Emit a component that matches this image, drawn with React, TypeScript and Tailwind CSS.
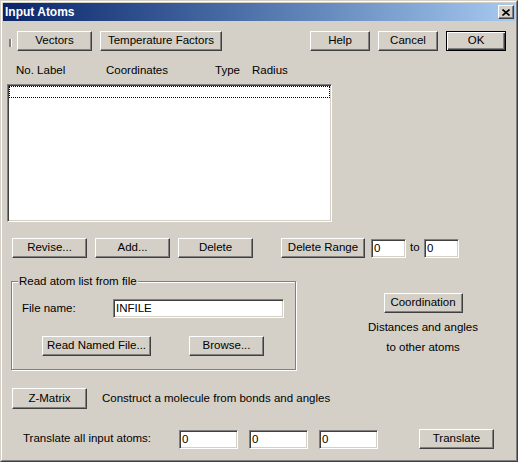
import React from "react";

const raised =
  "border border-t-white border-l-white border-r-[#404040] border-b-[#404040] shadow-[inset_-1px_-1px_0_#808080]";
const sunken =
  "border border-t-[#808080] border-l-[#808080] border-b-white border-r-white shadow-[inset_1px_1px_0_#404040,inset_-1px_-1px_0_#d4d0c8]";

function Btn({ className, children }: { className: string; children: React.ReactNode }) {
  return (
    <div className={`${raised} bg-[#d4d0c8] flex items-center justify-center shrink-0 ${className}`}>
      {children}
    </div>
  );
}

function Field({ className, value }: { className: string; value: string }) {
  return (
    <div className={`${sunken} bg-white shrink-0 h-[19px] pl-[2px] leading-[17px] ${className}`}>
      {value}
    </div>
  );
}

export default function App() {
  return (
    <div className="w-[518px] h-[462px] border border-t-[#d4d0c8] border-l-[#d4d0c8] border-r-[#404040] border-b-[#404040] font-['Liberation_Sans',Arial,sans-serif] text-[11.5px] text-black">
      <div className="h-full border border-t-white border-l-white border-r-[#808080] border-b-[#808080] bg-[#d4d0c8] flex flex-col">
        {/* title bar */}
        <div className="mx-[1px] mt-[1px] h-[18px] bg-linear-to-r from-[#0a246a] to-[#a6caf0] flex items-center justify-between pl-[2px] pr-[1px]">
          <span className="text-white font-bold text-[12px] leading-[18px]">Input Atoms</span>
          <div className={`${raised} bg-[#d4d0c8] w-[16px] h-[14px] flex items-center justify-center`}>
            <svg width="8" height="7" viewBox="0 0 8 7">
              <path d="M0.5 0.5 L7.5 6.5 M7.5 0.5 L0.5 6.5" stroke="#000" strokeWidth="1.6" fill="none" />
            </svg>
          </div>
        </div>

        {/* top buttons */}
        <div className="mt-[10px] flex items-start">
          <div className="ml-[7px] mt-[8px] w-[3px] h-[8px] bg-[#808080] border-r border-white" />
          <Btn className="ml-[5px] w-[75px] h-[20px]">Vectors</Btn>
          <Btn className="ml-[8px] w-[122px] h-[20px]">Temperature Factors</Btn>
          <Btn className="ml-[88px] w-[60px] h-[20px]">Help</Btn>
          <Btn className="ml-[8px] w-[60px] h-[20px]">Cancel</Btn>
          <div className="ml-[8px] w-[60px] h-[20px] border border-black bg-[#d4d0c8] flex items-center justify-center shadow-[inset_1px_1px_0_#fff,inset_-1px_-1px_0_#404040,inset_-2px_-2px_0_#808080]">
            OK
          </div>
        </div>

        {/* column headers */}
        <div className="mt-[12px] ml-[14px] h-[14px] flex leading-[14px]">
          <span className="w-[90px]">No. Label</span>
          <span className="w-[109px]">Coordinates</span>
          <span className="w-[37px]">Type</span>
          <span>Radius</span>
        </div>

        {/* atom list */}
        <div className={`${sunken} mt-[7px] ml-[5px] w-[325px] h-[138px] bg-white p-[1px]`}>
          <div className="h-[12px] border border-dotted border-black" />
        </div>

        {/* edit buttons */}
        <div className="mt-[16px] flex items-center">
          <Btn className="ml-[10px] w-[75px] h-[20px]">Revise...</Btn>
          <Btn className="ml-[8px] w-[75px] h-[20px]">Add...</Btn>
          <Btn className="ml-[8px] w-[75px] h-[20px]">Delete</Btn>
          <Btn className="ml-[28px] w-[84px] h-[20px]">Delete Range</Btn>
          <Field className="ml-[6px] w-[35px]" value="0" />
          <span className="ml-[4px] w-[14px]">to</span>
          <Field className="w-[35px]" value="0" />
        </div>

        {/* file group + coordination */}
        <div className="mt-[23px] flex items-start">
          <div className="relative ml-[9px] w-[285px] h-[89px] border border-[#808080] shadow-[1px_1px_0_#fff,inset_1px_1px_0_#fff] flex flex-col">
            <span className="absolute -top-[8px] left-[6px] px-[1px] bg-[#d4d0c8] leading-[14px]">
              Read atom list from file
            </span>
            <div className="mt-[17px] flex items-center">
              <span className="ml-[10px] w-[91px]">File name:</span>
              <Field className="w-[171px]" value="INFILE" />
            </div>
            <div className="mt-[18px] flex">
              <Btn className="ml-[30px] w-[109px] h-[20px]">Read Named File...</Btn>
              <Btn className="ml-[38px] w-[75px] h-[20px]">Browse...</Btn>
            </div>
          </div>
          <div className="ml-[47px] w-[160px] flex flex-col items-center">
            <Btn className="mt-[12px] w-[79px] h-[20px]">Coordination</Btn>
            <div className="mt-[4px] leading-[20px] text-center">
              Distances and angles
              <br />
              to other atoms
            </div>
          </div>
        </div>

        {/* z-matrix */}
        <div className="mt-[18px] flex items-center">
          <Btn className="ml-[10px] w-[75px] h-[21px]">Z-Matrix</Btn>
          <span className="ml-[15px]">Construct a molecule from bonds and angles</span>
        </div>

        {/* translate */}
        <div className="mt-[20px] flex items-center">
          <span className="ml-[21px] w-[156px]">Translate all input atoms:</span>
          <Field className="w-[59px]" value="0" />
          <Field className="ml-[11px] w-[59px]" value="0" />
          <Field className="ml-[11px] w-[59px]" value="0" />
          <Btn className="ml-[41px] w-[75px] h-[20px]">Translate</Btn>
        </div>
      </div>
    </div>
  );
}
